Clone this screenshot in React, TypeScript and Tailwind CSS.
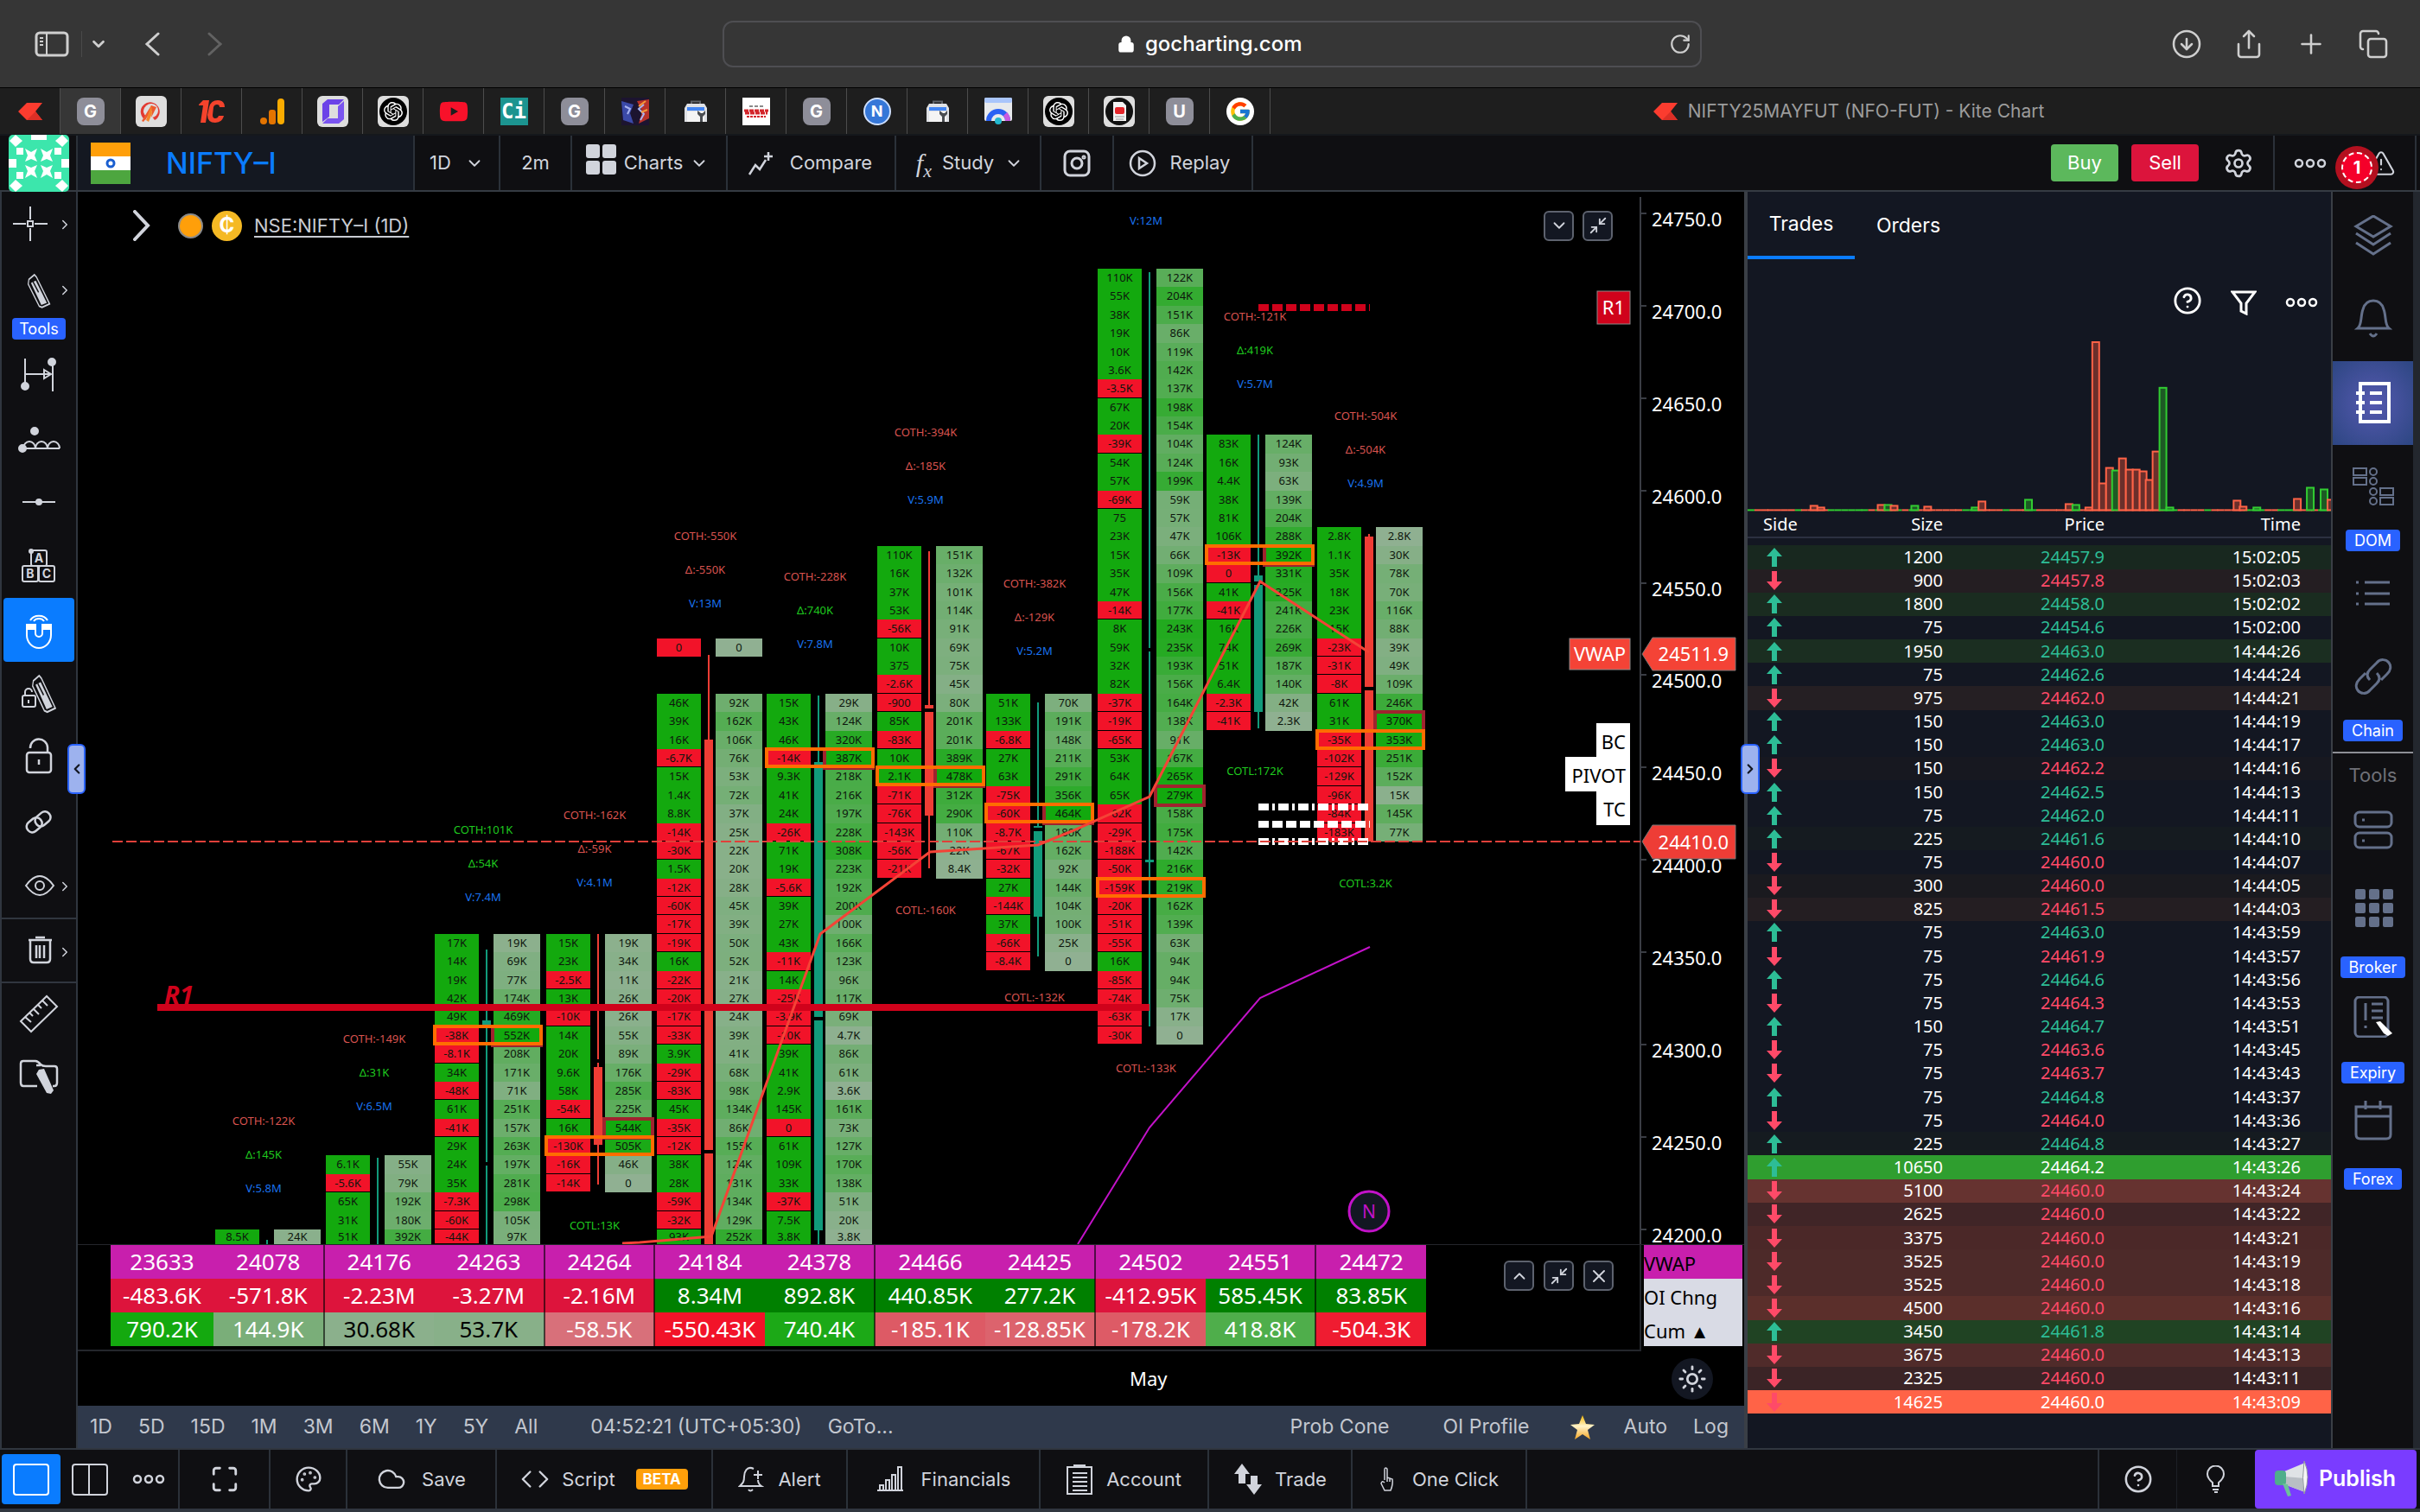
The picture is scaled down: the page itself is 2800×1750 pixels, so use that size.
import React from "react";
import type { ReactNode } from "react";
import {
  ChevronDown,
  ChevronLeft,
  ChevronRight,
  ChevronUp,
  CircleArrowDown,
  CircleHelp,
  Cloud,
  Code,
  Copy,
  Lock,
  Maximize,
  Minimize2,
  Palette,
  Plus,
  RotateCw,
  Settings,
  Share,
  Sun,
  TriangleAlert,
  X,
} from "lucide-react";
import { SiOpenai } from "react-icons/si";
import { FaYoutube } from "react-icons/fa";
import { FcGoogle } from "react-icons/fc";

const UI = "font-['Inter',sans-serif]";
const DATA = "font-['Noto_Sans',sans-serif]";

/* ---------------------------------------------------------------- browser */

function KiteLogo() {
  return (
    <svg viewBox="0 0 28 20" className="h-5 w-7" aria-hidden="true">
      <path d="M10 0H28L20 10L28 20H10L0 10Z" fill="#fb3c2f" />
      <path d="M20 10L28 20H10Z" fill="#dc2f26" />
    </svg>
  );
}

function LetterTile({ letter }: { letter: string }) {
  return (
    <span className="flex size-8 items-center justify-center rounded-lg bg-[#8e8e99] text-xl font-bold text-white">
      {letter}
    </span>
  );
}

function OpenAiTile() {
  return (
    <span className="flex size-9 items-center justify-center rounded-md bg-[#dedede]">
      <span className="flex size-8 items-center justify-center rounded-full bg-black text-white">
        <SiOpenai size={22} />
      </span>
    </span>
  );
}

function ToolboxIcon() {
  return (
    <svg viewBox="0 0 28 26" className="h-[26px] w-7" aria-hidden="true">
      <path d="M9 5V1.500H19V5" fill="none" stroke="#5f6368" strokeWidth="2" />
      <path d="M4 4H24L27 9V25H1V9Z" fill="#dfe1e5" />
      <rect x="4" y="8" width="20" height="4" fill="#4285f4" />
      <rect x="4" y="13" width="20" height="12" fill="#f4f4f4" />
      <path d="M16 12v4l3 3v6h3v-6l3-3v-4l-3 3h-2Z" fill="#4a4d52" />
    </svg>
  );
}

function PTile() {
  return (
    <svg viewBox="0 0 36 36" className="size-9" aria-hidden="true">
      <rect width="36" height="36" rx="6" fill="#dedede" />
      <path d="M14 29A11 11 0 1 1 22 28L19 24A7 7 0 1 0 13 24L11 28" fill="#e23b33" fillRule="evenodd" />
      <circle cx="18" cy="17" r="8" fill="#dedede" />
      <path d="M18 11L24 13L18 25L19 17L9 30L7 29Z" fill="#ee5a2e" />
      <path d="M18 11L12 28L15 30L19 20Z" fill="#f2862b" />
    </svg>
  );
}

function OneCTile() {
  return (
    <svg viewBox="0 0 32 28" className="h-7 w-8" aria-hidden="true">
      <path d="M1 6L6 1H13L9 27H3L6 7H1Z" fill="#f4432c" />
      <path d="M31 9H25Q25 6 22 6Q19 6 18 9L17 18Q17 22 20 22Q23 22 24 19H30Q28 27 20 27Q11 27 11 18L13 9Q15 1 23 1Q31 1 31 9Z" fill="#f4432c" />
    </svg>
  );
}

function AnalyticsTile() {
  return (
    <svg viewBox="0 0 28 30" className="h-[30px] w-7" aria-hidden="true">
      <circle cx="4" cy="26" r="4" fill="#e37400" />
      <rect x="10" y="13" width="8" height="17" rx="3" fill="#e37400" />
      <rect x="20" y="0" width="8" height="30" rx="4" fill="#f9ab00" />
    </svg>
  );
}

function PurpleTile() {
  return (
    <svg viewBox="0 0 36 36" className="size-9" aria-hidden="true">
      <rect width="36" height="36" rx="6" fill="#dedede" />
      <path d="M12 4H31L25 10H14V24L6 30V9Z" fill="#6b42e8" />
      <path d="M24 12L31 6V27L25 32H6L12 26H24Z" fill="#7a54f0" />
    </svg>
  );
}

function CiTile() {
  return (
    <span className="flex size-8 items-center justify-center bg-[#1c9490] text-2xl font-bold text-white font-['DejaVu_Sans_Mono',monospace]">
      Ci
    </span>
  );
}

function ArtTile() {
  return (
    <svg viewBox="0 0 32 32" className="size-8" aria-hidden="true">
      <rect width="32" height="32" fill="#1c1430" />
      <path d="M0 4L14 8L10 18L14 30L2 26Z" fill="#3b4aa8" />
      <path d="M18 4L32 2V24L20 30L24 16Z" fill="#b8322a" />
      <path d="M4 10l6 3-3 6M26 8l-6 5 6 6-4 7" fill="none" stroke="#a9b4f0" strokeWidth="2" />
      <path d="M28 4l-8 6M30 14l-7 3" stroke="#f59a3a" strokeWidth="2" />
    </svg>
  );
}

function AlertTile() {
  return (
    <svg viewBox="0 0 32 32" className="size-8" aria-hidden="true">
      <rect width="32" height="32" fill="#fff" />
      <path d="M8 10H24" stroke="#8a8a8a" strokeWidth="2" strokeDasharray="4 2" />
      <path d="M2 15H30M3 18H29" stroke="#d3262c" strokeWidth="3" strokeDasharray="5 1" />
      <path d="M5 22H27" stroke="#d3262c" strokeWidth="2" strokeDasharray="3 1" />
    </svg>
  );
}

function NTile() {
  return (
    <span className="flex size-8 items-center justify-center rounded-full border-2 border-[#cfe0ff] bg-[#3577d8] text-lg font-bold text-white">
      N
    </span>
  );
}

function GaugeTile() {
  return (
    <svg viewBox="0 0 32 32" className="size-8" aria-hidden="true">
      <rect width="32" height="27" rx="2" fill="#e8eaed" />
      <rect width="32" height="6" rx="2" fill="#a9c5fb" />
      <path d="M5 27A11 11 0 0 1 27 27" fill="none" stroke="#2a62f4" strokeWidth="6" />
      <path d="M24 19A11 11 0 0 1 27 27" fill="none" stroke="#c95be0" strokeWidth="6" />
      <circle cx="16" cy="27" r="4" fill="#22b8cf" />
    </svg>
  );
}

function DocTile() {
  return (
    <svg viewBox="0 0 36 36" className="size-9" aria-hidden="true">
      <rect width="36" height="36" rx="6" fill="#dedede" />
      <circle cx="18" cy="18" r="16" fill="#111" />
      <path d="M11 7H22L26 11V29H11Z" fill="#f3f3f3" />
      <rect x="13" y="13" width="11" height="8" rx="2" fill="#e5252a" />
      <path d="M13 24H24M14 27H23" stroke="#999" />
    </svg>
  );
}

const tabs: { name: string; icon: ReactNode }[] = [
  { name: "Kite", icon: <KiteLogo /> },
  { name: "GoCharting", icon: <LetterTile letter="G" /> },
  { name: "Tab 3", icon: <PTile /> },
  { name: "Tab 4", icon: <OneCTile /> },
  { name: "Analytics", icon: <AnalyticsTile /> },
  { name: "Tab 6", icon: <PurpleTile /> },
  { name: "ChatGPT", icon: <OpenAiTile /> },
  { name: "YouTube", icon: <FaYoutube size={34} color="#f8112a" /> },
  { name: "Tab 9", icon: <CiTile /> },
  { name: "Tab 10", icon: <LetterTile letter="G" /> },
  { name: "Tab 11", icon: <ArtTile /> },
  { name: "Tab 12", icon: <ToolboxIcon /> },
  { name: "Tab 13", icon: <AlertTile /> },
  { name: "Tab 14", icon: <LetterTile letter="G" /> },
  { name: "Tab 15", icon: <NTile /> },
  { name: "Tab 16", icon: <ToolboxIcon /> },
  { name: "PageSpeed", icon: <GaugeTile /> },
  { name: "ChatGPT 2", icon: <OpenAiTile /> },
  { name: "Tab 19", icon: <DocTile /> },
  { name: "Tab 20", icon: <LetterTile letter="U" /> },
  {
    name: "Google",
    icon: (
      <span className="flex size-8 items-center justify-center rounded-full bg-white">
        <FcGoogle size={26} />
      </span>
    ),
  },
];

function BrowserChrome() {
  return (
    <header className="bg-[#363636] text-[#cfcfcf]">
      <div className="flex h-[102px] items-center border-b border-black pr-[36px] pl-[40px]">
        <div className="flex flex-1 items-center">
          <button aria-label="Sidebar" className="border-r border-[#4a4a4a] pr-[14px]">
            <svg viewBox="0 0 40 30" className="h-[30px] w-10" fill="none" stroke="currentColor" strokeWidth="3" aria-hidden="true">
              <rect x="2" y="2" width="36" height="26" rx="4" />
              <path d="M14 2V28" strokeWidth="2" />
              <path d="M6 8H10M6 12H10M6 16H10" strokeWidth="2" />
            </svg>
          </button>
          <button aria-label="Tab groups" className="ml-2">
            <ChevronDown size={22} strokeWidth={3} />
          </button>
          <button aria-label="Back" className="ml-[42px]">
            <svg viewBox="0 0 20 28" className="h-7 w-5" fill="none" stroke="currentColor" strokeWidth="3" strokeLinecap="round" aria-hidden="true">
              <path d="M16 2L3 14L16 26" />
            </svg>
          </button>
          <button aria-label="Forward" className="ml-[52px] text-[#626262]">
            <svg viewBox="0 0 20 28" className="h-7 w-5" fill="none" stroke="currentColor" strokeWidth="3" strokeLinecap="round" aria-hidden="true">
              <path d="M3 2L16 14L3 26" />
            </svg>
          </button>
        </div>
        <div className="flex h-[54px] w-[1133px] items-center rounded-xl border-2 border-[#4e4e52] pr-[10px]">
          <div className="flex flex-1 items-center justify-center gap-3 pl-9 text-white">
            <Lock size={20} strokeWidth={3} className="fill-current" />
            <input
              aria-label="Address"
              defaultValue="gocharting.com"
              className="w-[186px] bg-transparent text-[24px] font-medium text-white outline-none"
            />
          </div>
          <button aria-label="Reload">
            <RotateCw size={26} />
          </button>
        </div>
        <div className="flex flex-1 items-center justify-end gap-[36px]">
          <button aria-label="Downloads"><CircleArrowDown size={36} strokeWidth={1.700} /></button>
          <button aria-label="Share"><Share size={36} strokeWidth={1.700} /></button>
          <button aria-label="New tab"><Plus size={36} strokeWidth={1.700} /></button>
          <button aria-label="Show tabs"><Copy size={36} strokeWidth={1.700} /></button>
        </div>
      </div>
      <div className="flex h-[55px] border-b-2 border-[#15181c] bg-[#1e1e1e]">
        {tabs.map((t, i) => (
          <button
            key={t.name}
            aria-label={t.name}
            className={`flex w-[70px] shrink-0 items-center justify-center border-r border-[#4c4c4c] ${i === 1 ? "bg-[#363636]" : ""}`}
          >
            {t.icon}
          </button>
        ))}
        <a href="#kite" className="flex flex-1 items-center justify-center gap-3 pl-[8px] text-[21px] text-[#9c9c9c]">
          <KiteLogo />
          NIFTY25MAYFUT (NFO-FUT) - Kite Chart
        </a>
      </div>
    </header>
  );
}

/* ---------------------------------------------------------------- top bar */

function Dots({ className = "" }: { className?: string }) {
  return (
    <svg viewBox="0 0 38 14" className={`h-[14px] w-[38px] ${className}`} fill="none" stroke="currentColor" strokeWidth="2.500" aria-hidden="true">
      <circle cx="6" cy="7" r="4" />
      <circle cx="19" cy="7" r="4" />
      <circle cx="32" cy="7" r="4" />
    </svg>
  );
}

function Avatar() {
  return (
    <svg viewBox="0 0 70 66" className="h-[66px] w-[70px]" aria-hidden="true">
      <rect width="70" height="66" rx="5" fill="#3ce6ac" />
      <g fill="#fff">
        {[0, 1, 2, 3].map((q) => (
          <g key={q} transform={`${q % 2 ? "translate(70 0) scale(-1 1)" : ""} ${q > 1 ? "translate(0 66) scale(1 -1)" : ""}`}>
            <path d="M8 0L16 7L8 14L1 7Z" />
            <rect x="9" y="15" width="8" height="8" />
            <path d="M19 16L26 20L33 16L30 24L33 31L26 28L19 31L22 24Z" />
            <path d="M26 0H35V6H26Z" opacity={q > 1 ? 0 : 1} />
            <rect x="0" y="28" width="9" height="5" />
          </g>
        ))}
      </g>
    </svg>
  );
}

function TopBar() {
  const cell = "flex items-center border-r-2 border-[#2b3139]";
  return (
    <div className="flex h-[65px] border-b-2 border-[#353b43] bg-[#0f0f12] text-[22px] text-[#d1d4dc]">
      <button aria-label="Profile" className="flex w-[90px] shrink-0 items-center border-r-2 border-[#2b3139] pl-[10px]">
        <Avatar />
      </button>
      <button className="flex w-[390px] items-center gap-[41px] border-r-2 border-[#2b3139] bg-[#141821] pl-[15px] text-[34px] font-medium text-[#0a7cff]">
        <svg viewBox="0 0 46 48" className="h-12 w-[46px]" aria-hidden="true">
          <rect width="46" height="16" fill="#ff9f0a" />
          <rect y="16" width="46" height="16" fill="#fff" />
          <rect y="32" width="46" height="16" fill="#4da63f" />
          <circle cx="23" cy="24" r="4" fill="none" stroke="#1a5fd0" strokeWidth="3" />
        </svg>
        NIFTY–I
      </button>
      <button className={`${cell} w-[99px] justify-center gap-4`}>
        1D <ChevronDown size={22} />
      </button>
      <button className={`${cell} w-[83px] justify-center`}>2m</button>
      <button className={`${cell} w-[180px] justify-center gap-2 pr-1`}>
        <svg viewBox="0 0 36 36" className="mb-2 size-9 fill-current" aria-hidden="true">
          <rect width="16" height="16" rx="3" />
          <rect x="19" width="16" height="16" rx="3" />
          <rect y="19" width="16" height="16" rx="3" />
          <rect x="19" y="19" width="16" height="16" rx="3" />
        </svg>
        Charts <ChevronDown size={22} />
      </button>
      <button className={`${cell} w-[195px] justify-center gap-[18px] pr-1`}>
        <svg viewBox="0 0 32 30" className="h-[30px] w-8" fill="none" stroke="currentColor" strokeWidth="2.500" aria-hidden="true">
          <path d="M3 28L10 17L15 22L22 11M20 7H30M25 2V12" />
        </svg>
        Compare
      </button>
      <button className={`${cell} w-[168px] justify-center gap-3 pl-1`}>
        <span className="italic font-['Liberation_Serif',serif] text-[30px]">
          f<sub className="text-[22px]">x</sub>
        </span>
        Study <ChevronDown size={22} />
      </button>
      <button aria-label="Snapshot" className={`${cell} w-[84px] justify-center`}>
        <svg viewBox="0 0 32 32" className="size-8" fill="none" stroke="currentColor" strokeWidth="3" aria-hidden="true">
          <rect x="2" y="2" width="28" height="28" rx="6" />
          <circle cx="16" cy="16" r="6" />
          <circle cx="24" cy="9" r="1" />
        </svg>
      </button>
      <button className={`${cell} w-[161px] justify-center gap-[16px] pr-2`}>
        <svg viewBox="0 0 32 32" className="size-8" fill="none" stroke="currentColor" strokeWidth="2.500" aria-hidden="true">
          <circle cx="16" cy="16" r="14" />
          <path d="M12 10L21 16L12 22Z" />
        </svg>
        Replay
      </button>
      <div className="flex flex-1 items-center justify-end border-r-2 border-[#2b3139]">
        <button className="mr-[15px] h-[43px] w-[78px] rounded bg-[#5cb85c] text-white">Buy</button>
        <button className="mr-[9px] h-[43px] w-[78px] rounded bg-[#dc143c] text-white">Sell</button>
        <button aria-label="Settings" className="mr-1 flex w-[73px] justify-center">
          <Settings size={36} strokeWidth={1.800} />
        </button>
      </div>
      <button aria-label="More" className="flex w-[82px] items-center justify-center">
        <Dots />
      </button>
      <button aria-label="Warnings" className="relative mr-[4px] flex w-[82px] items-center border-r-2 border-[#2b3139] pl-[24px]">
        <TriangleAlert size={34} strokeWidth={1.500} />
        <span className="absolute top-[12px] left-[-12px] flex size-[50px] items-center justify-center rounded-full bg-[#b3101f]">
          <span className="flex size-9 items-center justify-center rounded-full border-2 border-dashed border-white bg-[#f5002a] text-xl font-bold text-white">
            1
          </span>
        </span>
      </button>
    </div>
  );
}

/* ----------------------------------------------------------- left toolbar */

const pencilBody = (
  <>
    <path d="M3 4L11 0L14 2L33 25L22 28L18 27L2 8Z" fill="none" stroke="currentColor" strokeWidth="1.500" />
    <path d="M6 7L13 5L29 24L21 26Z" fill="currentColor" />
    <path d="M9 6L17 15" stroke="#0f0f12" strokeWidth="1.500" />
  </>
);

const leftTools: { name: string; icon: ReactNode; more?: boolean; tall?: boolean; active?: boolean; divide?: boolean }[] = [
  {
    name: "Cursor",
    more: true,
    icon: (
      <path d="M2 20H17M27 20H42M22 0V15M22 25V40M19 17H25V23H19Z" fill="none" stroke="currentColor" strokeWidth="2" />
    ),
  },
  { name: "Drawing tools", more: true, tall: true, icon: <g transform="translate(8 2) scale(.8 1.350)">{pencilBody}</g> },
  {
    name: "Date range",
    icon: (
      <g fill="none" stroke="currentColor" strokeWidth="2">
        <path d="M6 2V36M38 4V40M6 20H36M28 15L36 20L28 25Z" />
        <circle cx="6" cy="34" r="4" fill="currentColor" />
        <circle cx="37" cy="6" r="4" fill="currentColor" />
      </g>
    ),
  },
  {
    name: "Cycles",
    icon: (
      <g fill="none" stroke="currentColor" strokeWidth="2">
        <path d="M0 32H46M4 32A7 8 0 0 1 18 32A7 8 0 0 1 32 32A7 8 0 0 1 46 32" />
        <circle cx="3" cy="32" r="4" fill="currentColor" />
        <circle cx="17" cy="12" r="4" fill="currentColor" />
      </g>
    ),
  },
  {
    name: "Horizontal line",
    icon: (
      <>
        <path d="M3 20H41" stroke="currentColor" strokeWidth="2" />
        <circle cx="22" cy="20" r="4" fill="currentColor" />
      </>
    ),
  },
  {
    name: "Pattern",
    icon: (
      <g>
        <g fill="none" stroke="currentColor" strokeWidth="2">
          <rect x="13" y="2" width="18" height="18" rx="2" />
          <rect x="3" y="20" width="18" height="18" rx="2" />
          <rect x="22" y="20" width="18" height="18" rx="2" />
        </g>
        <circle cx="13" cy="3" r="3" fill="currentColor" />
        <g fill="currentColor" className="text-[14px] font-bold" textAnchor="middle">
          <text x="22" y="16">A</text>
          <text x="12" y="34">B</text>
          <text x="31" y="34">C</text>
        </g>
      </g>
    ),
  },
  {
    name: "Magnet",
    active: true,
    icon: (
      <g fill="none" stroke="currentColor" strokeWidth="2">
        <path d="M8 14H18V24A4 4 0 0 0 26 24V14H36V26A14 15 0 0 1 8 26Z" />
        <path d="M8 14H18V19H8ZM26 14H36V19H26Z" fill="currentColor" />
        <path d="M12 9A11 9 0 0 1 32 9M16 10A7 6 0 0 1 28 10" />
      </g>
    ),
  },
  {
    name: "Lock drawing mode",
    icon: (
      <>
        <g transform="translate(13 -1) scale(.85 1.500)">{pencilBody}</g>
        <g fill="none" stroke="currentColor" strokeWidth="2">
          <rect x="3" y="22" width="15" height="13" rx="2" fill="#0f0f12" />
          <path d="M6 22V18A4 4 0 0 1 14 18M10 27V31" />
        </g>
      </>
    ),
  },
  {
    name: "Unlock",
    icon: (
      <g fill="none" stroke="currentColor" strokeWidth="2.500">
        <rect x="8" y="14" width="28" height="23" rx="3" />
        <path d="M12 9A10 10 0 0 1 32 8V14M22 22V28" />
      </g>
    ),
  },
  {
    name: "Link",
    icon: (
      <g fill="none" stroke="currentColor" strokeWidth="2.500" transform="rotate(-40 22 20)">
        <rect x="6" y="13" width="19" height="13" rx="6" />
        <rect x="18" y="14" width="19" height="13" rx="6" />
      </g>
    ),
  },
  {
    name: "Visibility",
    more: true,
    icon: (
      <g fill="none" stroke="currentColor" strokeWidth="2">
        <path d="M7 20Q23 -2 39 20Q23 42 7 20Z" />
        <circle cx="23" cy="20" r="5" />
      </g>
    ),
  },
  {
    name: "Delete",
    more: true,
    divide: true,
    icon: (
      <g fill="none" stroke="currentColor" strokeWidth="2.500">
        <path d="M10 8H37M12 8V30Q12 34 16 34H31Q35 34 35 30V8M18 5H29M19 14V29M23 14V29M28 14V29" />
      </g>
    ),
  },
  {
    name: "Ruler",
    divide: true,
    icon: (
      <g fill="none" stroke="currentColor" strokeWidth="2">
        <path d="M1 28L31 -1L43 11L13 40Z" />
        <path d="M6 23L13 29M11 18L15 22M16 14L22 20M21 9L25 13M26 4L32 10" />
      </g>
    ),
  },
  {
    name: "Object tree",
    icon: (
      <g>
        <path d="M20 30H4Q1 30 1 26V4Q1 1 4 1H18Q21 1 24 5Q26 7 30 7H40Q43 7 43 10V26Q43 30 40 30H38M19 6H24" fill="none" stroke="currentColor" strokeWidth="2.500" />
        <path d="M19 16L22 11L28 10L39 35L36 39L31 38Z" fill="currentColor" />
      </g>
    ),
  },
];

function LeftToolbar() {
  return (
    <nav aria-label="Drawing toolbar" className="relative flex w-[90px] shrink-0 flex-col border-r-2 border-l-2 border-[#30363f] bg-[#0f0f12] text-[#d1d4dc]">
      {leftTools.map((t) => (
        <button
          key={t.name}
          aria-label={t.name}
          className={`relative flex flex-col items-center justify-center ${t.tall ? "h-[100px] pt-4" : "h-[74px] pt-1"} ${t.divide ? "border-t-2 border-[#30363f]" : ""} ${
            t.active ? "mx-[2px] rounded bg-[#0a7cff] text-white" : ""
          } ${t.name === "Cursor" ? "pr-5" : ""}`}
        >
          <svg viewBox="0 0 44 44" className="h-11 w-11 overflow-visible" aria-hidden="true">
            {t.icon}
          </svg>
          {t.more && <ChevronRight size={18} className={`absolute right-[4px] ${t.tall ? "top-[31px]" : "top-[29px]"}`} />}
          {t.tall && <span className="mt-2 w-[62px] rounded bg-[#2962ff] text-[18px] leading-[25px] text-white">Tools</span>}
        </button>
      ))}
      <button
        aria-label="Collapse toolbar"
        className="absolute top-[639px] right-[-11px] z-10 flex h-[58px] w-[21px] items-center justify-center rounded-md border-2 border-[#2962ff] bg-[#9db2ee] text-[#131722]"
      >
        <ChevronLeft size={18} strokeWidth={3} className="shrink-0" />
      </button>
    </nav>
  );
}

/* ------------------------------------------------------------------ chart */

const TOP = 311;
const ROW = 21.385;
const FLOOR = 1440;
const rowY = (r: number) => Math.min(FLOOR, Math.round(TOP + r * ROW));

type Bar = {
  x: number;
  row: number;
  delta: string;
  volume: string;
  max: number;
  box?: number;
  peak?: number;
  up: boolean;
  wick: [number, number];
  bodies: [number, number][];
  gap?: number;
  note?: { y: number; coth: string; d: string; v: string };
  cotl?: { y: number; text: string };
};

const bars: Bar[] = [
  { x: 249, row: 52, delta: "8.5K", volume: "24K", max: 500, up: true, wick: [1435, FLOOR], bodies: [], note: { y: 1298, coth: "-122K", d: "145K", v: "5.8M" } },
  {
    x: 377, row: 48, max: 650, up: true, wick: [1340, FLOOR], bodies: [],
    delta: "6.1K -5.6K 65K 31K 51K",
    volume: "55K 79K 192K 180K 392K",
    note: { y: 1203, coth: "-149K", d: "31K", v: "6.5M" },
  },
  {
    x: 503, row: 36, max: 552, box: 41, peak: 41, up: true, wick: [1099, FLOOR], bodies: [[1181, 1186]], gap: 1345,
    delta: "17K 14K 19K 42K 49K -38K -8.1K 34K -48K 61K -41K 29K 24K 35K -7.3K -60K -44K",
    volume: "19K 69K 77K 174K 469K 552K 208K 171K 71K 251K 157K 263K 197K 281K 298K 105K 97K",
    note: { y: 961, coth: "101K", d: "54K", v: "7.4M" },
  },
  {
    x: 632, row: 36, max: 544, box: 47, peak: 46, up: false, wick: [1081, 1371], bodies: [[1235, 1325]], gap: 1226,
    delta: "15K 23K -2.5K 13K -10K 14K 20K 9.6K 58K -54K 16K -130K -16K -14K",
    volume: "19K 34K 11K 26K 26K 55K 89K 176K 285K 225K 544K 505K 46K 0",
    note: { y: 944, coth: "-162K", d: "-59K", v: "4.1M" },
    cotl: { y: 1418, text: "13K" },
  },
  {
    x: 760, row: 23, max: 340, up: false, wick: [758, FLOOR], bodies: [[856, FLOOR]], gap: 1331,
    delta: "46K 39K 16K -6.7K 15K 1.4K 8.8K -14K -30K 1.5K -12K -60K -17K -19K 16K -22K -20K -17K -33K 3.9K -29K -83K 45K -35K -12K 38K 28K -59K -32K 93K",
    volume: "92K 162K 106K 76K 53K 72K 37K 25K 22K 20K 28K 45K 39K 50K 52K 21K 27K 24K 39K 41K 68K 98K 134K 86K 155K 124K 131K 134K 129K 252K",
    note: { y: 621, coth: "-550K", d: "-550K", v: "13M" },
  },
  {
    x: 887, row: 23, max: 387, box: 26, peak: 26, up: true, wick: [805, FLOOR], bodies: [[882, 1424]], gap: 1177,
    delta: "15K 43K 46K -14K 9.3K 41K 24K -26K 71K 19K -5.6K 39K 27K 43K -11K 14K -25K -3.9K -10K 39K 41K 2.9K 145K 0 61K 109K 33K -37K 7.5K 3.8K",
    volume: "29K 124K 320K 387K 218K 216K 197K 228K 308K 223K 192K 200K 100K 166K 123K 96K 117K 69K 4.7K 86K 61K 3.6K 161K 73K 127K 170K 138K 51K 20K 3.8K",
    note: { y: 668, coth: "-228K", d: "740K", v: "7.8M" },
  },
  {
    x: 1015, row: 15, max: 478, box: 27, peak: 27, up: false, wick: [638, 1005], bodies: [[816, 944]], gap: 820,
    delta: "110K 16K 37K 53K -56K 10K 375 -2.6K -900 85K -83K 10K 2.1K -71K -76K -143K -56K -21K",
    volume: "151K 132K 101K 114K 91K 69K 75K 45K 80K 201K 201K 389K 478K 312K 290K 110K 22K 8.4K",
    note: { y: 501, coth: "-394K", d: "-185K", v: "5.9M" },
    cotl: { y: 1053, text: "-160K" },
  },
  {
    x: 1141, row: 23, max: 464, box: 29, peak: 29, up: true, wick: [813, 1107], bodies: [[956, 1061]], gap: 958,
    delta: "51K 133K -6.8K 27K 63K -75K -60K -8.7K -67K -32K 27K -144K 37K -66K -8.4K",
    volume: "70K 191K 148K 211K 291K 356K 464K 180K 162K 92K 144K 104K 100K 25K 0",
    note: { y: 676, coth: "-382K", d: "-129K", v: "5.2M" },
    cotl: { y: 1154, text: "-132K" },
  },
  {
    x: 1270, row: 0, max: 279, box: 33, peak: 28, up: true, wick: [315, 1188], bodies: [[995, 998]], gap: 750,
    delta: "110K 55K 38K 19K 10K 3.6K -3.5K 67K 20K -39K 54K 57K -69K 75 23K 15K 35K 47K -14K 8K 59K 32K 82K -37K -19K -65K 53K 64K 65K -62K -29K -188K -50K -159K -20K -51K -55K 16K -85K -74K -63K -30K",
    volume: "122K 204K 151K 86K 119K 142K 137K 198K 154K 104K 124K 199K 59K 57K 47K 66K 109K 156K 177K 243K 235K 193K 156K 164K 138K 91K 167K 265K 279K 158K 175K 142K 216K 219K 162K 139K 63K 94K 94K 75K 17K 0",
    note: { y: 178, coth: "", d: "", v: "12M" },
    cotl: { y: 1236, text: "-133K" },
  },
  {
    x: 1396, row: 9, max: 392, box: 15, peak: 15, up: true, wick: [503, 843], bodies: [[666, 824]], gap: 673,
    delta: "83K 16K 4.4K 38K 81K 106K -13K 0 41K -41K 16K 74K 51K 6.4K -2.3K -41K",
    volume: "124K 93K 63K 139K 204K 288K 392K 331K 325K 241K 226K 269K 187K 140K 42K 2.3K",
    note: { y: 367, coth: "-121K", d: "419K", v: "5.7M" },
    cotl: { y: 892, text: "172K" },
  },
  {
    x: 1524, row: 14, max: 370, box: 25, peak: 24, up: false, wick: [618, 974], bodies: [[621, 974]], gap: 795,
    delta: "2.8K 1.1K 35K 18K 23K 15K -23K -31K -8K 61K 31K -35K -102K -129K -96K -84K -183K",
    volume: "2.8K 30K 78K 70K 116K 88K 39K 49K 109K 246K 370K 353K 251K 152K 15K 145K 77K",
    note: { y: 482, coth: "-504K", d: "-504K", v: "4.9M" },
    cotl: { y: 1022, text: "3.2K" },
  },
];

function shade(value: string, max: number) {
  const t = Math.min(1, parseFloat(value) / max);
  const mix = (a: number, b: number) => Math.round(a + (b - a) * t);
  return `rgb(${mix(144, 18)},${mix(176, 169)},${mix(146, 14)})`;
}

function Cell({ x, y, h, w, fill, text }: { x: number; y: number; h: number; w: number; fill: string; text: string }) {
  return (
    <>
      <rect x={x} y={y} width={w} height={h} fill={fill} />
      <text x={x + w / 2} y={h < 19 ? y + 13 : y + 15} fill="#0d160d" textAnchor="middle">{text}</text>
    </>
  );
}

const signColor = (s: string) => (s.startsWith("-") ? "#d9534f" : "#1fc91f");

function Footprint({ bar }: { bar: Bar }) {
  const d = bar.delta.split(" ");
  const v = bar.volume.split(" ");
  const c = bar.x + 60;
  const color = bar.up ? "#119b7b" : "#ef3d35";
  return (
    <g>
      {d.map((t, i) => {
        const y = rowY(bar.row + i);
        const h = rowY(bar.row + i + 1) - y;
        const red = t.startsWith("-") || t === "0";
        return (
          <g key={i}>
            <Cell x={bar.x} y={y} w={51} h={red ? h - 1 : h} fill={red ? "#f21329" : "#13a90e"} text={t} />
            <Cell x={bar.x + 68} y={y} w={54} h={h} fill={shade(v[i], bar.max)} text={v[i]} />
          </g>
        );
      })}
      <rect x={c - 1} y={bar.wick[0]} width={2} height={bar.wick[1] - bar.wick[0]} fill={color} />
      {bar.bodies.map(([a, b]) => (
        <rect key={a} x={c - 5} y={a} width={10} height={b - a} fill={color} />
      ))}
      {bar.gap && <rect x={c - 6} y={bar.gap} width={12} height={4} fill="#000" />}
      {bar.peak !== undefined && (
        <rect x={bar.x + 67} y={rowY(bar.peak)} width={56} height={22} fill="none" stroke="#a0232e" strokeWidth={4} />
      )}
      {bar.box !== undefined && (
        <rect x={bar.x} y={rowY(bar.box)} width={123} height={20} fill="none" stroke="#ff6d00" strokeWidth={4} />
      )}
      <g textAnchor="middle">
        {bar.note && (
          <>
            {bar.note.coth && <text x={bar.x + 56} y={bar.note.y + 4} fill={signColor(bar.note.coth)}>COTH:{bar.note.coth}</text>}
            {bar.note.d && <text x={bar.x + 56} y={bar.note.y + 43} fill={signColor(bar.note.d)}>Δ:{bar.note.d}</text>}
            <text x={bar.x + 56} y={bar.note.y + 82} fill="#1a73f0">V:{bar.note.v}</text>
          </>
        )}
        {bar.cotl && <text x={bar.x + 56} y={bar.cotl.y + 5} fill={signColor(bar.cotl.text)}>COTL:{bar.cotl.text}</text>}
      </g>
    </g>
  );
}

const ticks = [24750, 24700, 24650, 24600, 24550, 24500, 24450, 24400, 24350, 24300, 24250, 24200];
const priceY = (p: number) => Math.round(1209 - ((p - 24300) / 50) * 106.9);

function Plot() {
  return (
    <svg viewBox="90 222 1928 1218" className={`block w-full ${DATA}`} role="img" aria-label="NIFTY-I footprint chart">
      <rect x="90" y="222" width="1928" height="1218" fill="#000" />
      <path d="M1898 228V1440" stroke="#3a3d44" strokeWidth="2" />
      <g className="text-[13px]">
        <Cell x={760} y={rowY(20)} w={51} h={21} fill="#f21329" text="0" />
        <Cell x={828} y={rowY(20)} w={54} h={21} fill="#90b092" text="0" />
        {bars.map((b) => (
          <Footprint key={b.x} bar={b} />
        ))}
      </g>
      <path d="M182 1166H1330" stroke="#d0021b" strokeWidth="8" />
      <text x="190" y="1162" fill="#d0021b" className="text-[29px] font-bold italic">R1</text>
      <path d="M1456 356H1585" stroke="#d0021b" strokeWidth="8" strokeDasharray="12 4" />
      <g stroke="#fff" strokeWidth="8">
        <path d="M1456 934H1585" strokeDasharray="12 4 3 4" />
        <path d="M1456 954H1585" strokeDasharray="12 4" />
        <path d="M1456 974H1585" strokeDasharray="12 4 3 4" />
      </g>
      <path d="M130 974H1898" stroke="#e0403a" strokeWidth="2" strokeDasharray="12 4" />
      <path d="M720 1439L740 1438L823 1431L949 1081L1076 986L1201 978L1240 962L1330 922L1458 673L1584 755" fill="none" stroke="#f44336" strokeWidth="3" />
      <path d="M1247 1440L1330 1305L1458 1155L1585 1096" fill="none" stroke="#c312c9" strokeWidth="2" />
      <circle cx="1584" cy="1402" r="23" fill="#131722" stroke="#c312c9" strokeWidth="3" />
      <text x="1584" y="1410" fill="#c312c9" textAnchor="middle" className="text-[21px]">N</text>

      <g className="text-[22px]" fill="#fff">
        {ticks.map((p) => (
          <g key={p}>
            <path d={`M1899 ${priceY(p)}H1905`} stroke="#3a3d44" strokeWidth="2" />
            <text x="1911" y={priceY(p) + 15}>{p}.0</text>
          </g>
        ))}
        <rect x="1848" y="337" width="38" height="38" fill="#d0021b" stroke="#8a8a8a" />
        <text x="1867" y="364" textAnchor="middle">R1</text>
        <rect x="1816" y="739" width="70" height="36" fill="#f44336" stroke="#8a8a8a" />
        <text x="1851" y="765" textAnchor="middle">VWAP</text>
        <path d="M1900 757L1912 738H2008V776H1912Z" fill="#f44336" stroke="#777" />
        <text x="2000" y="765" textAnchor="end">24511.9</text>
        <path d="M1900 974L1912 955H2008V994H1912Z" fill="#ee3d36" stroke="#777" />
        <text x="2000" y="983" textAnchor="end">24410.0</text>
        <path d="M1847 837H1886V955H1847V916H1811V876H1847Z" />
        <g fill="#000" textAnchor="end">
          <text x="1881" y="867">BC</text>
          <text x="1881" y="906">PIVOT</text>
          <text x="1881" y="945">TC</text>
        </g>
      </g>
    </svg>
  );
}

type Tone = { t: string; bg: string; dark?: boolean };
const RED = "bg-[#dd143c]";
const GREEN = "bg-[#008000]";
const vwapRow = ["23633", "24078", "24176", "24263", "24264", "24184", "24378", "24466", "24425", "24502", "24551", "24472"];
const oiRow: Tone[] = [
  { t: "-483.6K", bg: RED }, { t: "-571.8K", bg: RED }, { t: "-2.23M", bg: RED }, { t: "-3.27M", bg: RED },
  { t: "-2.16M", bg: RED }, { t: "8.34M", bg: GREEN }, { t: "892.8K", bg: GREEN }, { t: "440.85K", bg: GREEN },
  { t: "277.2K", bg: GREEN }, { t: "-412.95K", bg: RED }, { t: "585.45K", bg: GREEN }, { t: "83.85K", bg: GREEN },
];
const cumRow: Tone[] = [
  { t: "790.2K", bg: "bg-[#14a90f]" }, { t: "144.9K", bg: "bg-[#7aae79]" },
  { t: "30.68K", bg: "bg-[#8bb08c]", dark: true }, { t: "53.7K", bg: "bg-[#88b089]", dark: true },
  { t: "-58.5K", bg: "bg-[#d8707a]" }, { t: "-550.43K", bg: "bg-[#f21329]" },
  { t: "740.4K", bg: "bg-[#1ca917]" }, { t: "-185.1K", bg: "bg-[#dd5a65]" },
  { t: "-128.85K", bg: "bg-[#dc636d]" }, { t: "-178.2K", bg: "bg-[#dd5b66]" },
  { t: "418.8K", bg: "bg-[#4fae4b]" }, { t: "-504.3K", bg: "bg-[#ef1c31]" },
];
const ruled = (i: number) => ([2, 4, 5, 7, 9, 11].includes(i) ? "border-l-2 border-black/60" : "");

function PaneButton({ label, children }: { label: string; children: ReactNode }) {
  return (
    <button aria-label={label} className="flex size-[35px] items-center justify-center rounded-md border-2 border-[#5d626e] bg-[#131722] text-[#d1d4dc]">
      {children}
    </button>
  );
}

function StudyPane() {
  return (
    <div className="flex border-t border-[#24262c] bg-black">
      <div className="flex flex-1 border-r-2 border-b-2 border-[#24262c] pb-1 pl-[38px]">
        <table className={`w-[1522px] table-fixed border-collapse text-center text-[26px] leading-[39px] text-white ${DATA}`}>
          <tbody>
            <tr className="h-[39px]">
              {vwapRow.map((t, i) => (
                <td key={i} className={`bg-[#c81fad] p-0 ${i === 0 ? "w-[119px]" : ""} ${ruled(i)}`}>{t}</td>
              ))}
            </tr>
            {[oiRow, cumRow].map((row, r) => (
              <tr key={r} className="h-[39px]">
                {row.map((c, i) => (
                  <td key={i} className={`p-0 ${c.bg} ${c.dark ? "text-black" : ""} ${ruled(i)}`}>{c.t}</td>
                ))}
              </tr>
            ))}
          </tbody>
        </table>
        <div className="flex flex-1 justify-end gap-[11px] pt-[18px] pr-[30px]">
          <PaneButton label="Move pane up"><ChevronUp size={22} /></PaneButton>
          <PaneButton label="Minimise pane"><Minimize2 size={22} /></PaneButton>
          <PaneButton label="Close pane"><X size={24} /></PaneButton>
        </div>
      </div>
      <div className={`w-[119px] pr-[2px] pl-[3px] text-[22px] leading-[35px] text-black ${DATA}`}>
        <div className="bg-[#c81fad] pt-1">VWAP</div>
        <div className="bg-[#d9dbe5] pt-1">OI Chng</div>
        <div className="bg-[#d9dbe5] pt-1">Cum ▲</div>
      </div>
    </div>
  );
}

function Star() {
  return (
    <svg viewBox="0 0 30 30" className="size-[30px]" aria-hidden="true">
      <defs>
        <linearGradient id="star" x1="0" y1="0" x2="0" y2="1">
          <stop offset="0" stopColor="#f7b500" />
          <stop offset=".45" stopColor="#fff3c9" />
          <stop offset="1" stopColor="#f5a623" />
        </linearGradient>
      </defs>
      <path d="M15 1L19 11L29 12L21 18L24 29L15 23L6 29L9 18L1 12L11 11Z" fill="url(#star)" />
    </svg>
  );
}

function ChartSection() {
  return (
    <section className="relative flex min-w-0 flex-1 flex-col bg-black">
      <Plot />
      <div className="absolute top-[20px] right-0 left-0 flex h-[38px] items-center pr-[152px] pl-[61px]">
        <button aria-label="Expand legend" className="text-[#d1d4dc]">
          <svg viewBox="0 0 24 36" className="h-9 w-6" fill="none" stroke="currentColor" strokeWidth="4" strokeLinecap="round" aria-hidden="true">
            <path d="M5 2L20 18L5 34" />
          </svg>
        </button>
        <span className="ml-[31px] size-[29px] rounded-full border-2 border-[#8a8a8a] bg-[#ff9f0a]" />
        <span className="ml-[10px] flex size-[35px] items-center justify-center rounded-full bg-[#f5b924] text-2xl font-bold text-white">₵</span>
        <a href="#symbol" className="ml-[14px] text-[22px] text-[#c9ccd3] underline decoration-2 underline-offset-4">
          NSE:NIFTY–I (1D)
        </a>
        <div className="flex flex-1 justify-end gap-[10px]">
          <PaneButton label="Move pane down"><ChevronDown size={22} /></PaneButton>
          <PaneButton label="Minimise chart"><Minimize2 size={22} /></PaneButton>
        </div>
      </div>
      <StudyPane />
      <div className={`flex flex-1 items-center bg-black pr-[36px] pl-[1217px] text-[22px] text-white ${DATA}`}>
        <span>May</span>
        <button aria-label="Theme" className="ml-auto flex size-12 items-center justify-center rounded-full bg-[#131722] text-[#d1d4dc]">
          <Sun size={34} strokeWidth={2} />
        </button>
      </div>
      <div className="flex h-[49px] items-center bg-[#2f394b] pr-[18px] pl-[14px] text-[23px] text-[#c3c7cf]">
        {["1D", "5D", "15D", "1M", "3M", "6M", "1Y", "5Y", "All"].map((r) => (
          <button key={r} className="mr-[30px]">{r}</button>
        ))}
        <span className="ml-[31px]">04:52:21 (UTC+05:30)</span>
        <button className="ml-[30px]">GoTo...</button>
        <div className="flex flex-1 items-center justify-end">
          <button className="mr-[62px]">Prob Cone</button>
          <button className="mr-[46px]">OI Profile</button>
          <button aria-label="Favourite" className="mr-[33px]"><Star /></button>
          <button className="mr-[30px]">Auto</button>
          <button>Log</button>
        </div>
      </div>
    </section>
  );
}

/* ------------------------------------------------------------ trades tape */

const spikes: [number, number, "r" | "g"][] = [
  [9, 5, "r"], [10, 3, "r"], [19, 6, "r"], [20, 6, "g"], [21, 5, "r"], [24, 5, "g"], [26, 4, "r"], [33, 3, "g"],
  [34, 10, "r"], [41, 12, "g"], [47, 7, "r"], [48, 6, "g"], [50, 3, "r"], [51, 195, "r"], [52, 31, "r"], [53, 49, "r"],
  [54, 46, "g"], [55, 60, "r"], [56, 47, "r"], [57, 47, "r"], [58, 45, "r"], [59, 35, "r"], [60, 68, "r"], [61, 142, "g"],
  [62, 3, "g"], [72, 11, "r"], [73, 4, "r"], [75, 3, "g"], [81, 13, "r"], [83, 26, "g"], [85, 24, "g"], [86, 12, "r"],
];
const floorColors = "grrrrrrgrrrrggggggrgrrgrgrrrrrrrgggrrrgrrrgrrrrrgrrrrrrrrrrrrrggrrrrgrrrrrgggrrgggrrrggrr";

function TapeHistogram() {
  return (
    <svg viewBox="0 0 677 200" className="block w-full" role="img" aria-label="Trade size histogram">
      {floorColors.slice(0, 87).split("").map((c, i) => (
        <rect key={i} x={Math.round(i * 7.79)} y={197} width={8} height={2} fill={c === "r" ? "#ff6347" : "#32cd32"} />
      ))}
      {spikes.map(([i, h, c]) => (
        <rect
          key={i}
          x={Math.round(400 + (i - 51) * 7.79)}
          y={198 - h}
          width={8}
          height={h}
          fill={c === "r" ? "#6b2f2b" : "#1d5a24"}
          stroke={c === "r" ? "#ff6347" : "#32cd32"}
          strokeWidth={2}
        />
      ))}
    </svg>
  );
}

const N = "";
const trades: [boolean, string, string, string, string][] = [
  [true, "1200", "24457.9", "15:02:05", "bg-[#18281f]"],
  [false, "900", "24457.8", "15:02:03", "bg-[#241e22]"],
  [true, "1800", "24458.0", "15:02:02", "bg-[#1a2c20]"],
  [true, "75", "24454.6", "15:02:00", N],
  [true, "1950", "24463.0", "14:44:26", "bg-[#1b2e21]"],
  [true, "75", "24462.6", "14:44:24", N],
  [false, "975", "24462.0", "14:44:21", "bg-[#251f23]"],
  [true, "150", "24463.0", "14:44:19", N],
  [true, "150", "24463.0", "14:44:17", N],
  [false, "150", "24462.2", "14:44:16", "bg-[#171820]"],
  [true, "150", "24462.5", "14:44:13", N],
  [true, "75", "24462.0", "14:44:11", N],
  [true, "225", "24461.6", "14:44:10", "bg-[#151b20]"],
  [false, "75", "24460.0", "14:44:07", N],
  [false, "300", "24460.0", "14:44:05", "bg-[#1a1a1f]"],
  [false, "825", "24461.5", "14:44:03", "bg-[#241e22]"],
  [true, "75", "24463.0", "14:43:59", N],
  [false, "75", "24461.9", "14:43:57", N],
  [true, "75", "24464.6", "14:43:56", N],
  [false, "75", "24464.3", "14:43:53", N],
  [true, "150", "24464.7", "14:43:51", N],
  [false, "75", "24463.6", "14:43:45", N],
  [false, "75", "24463.7", "14:43:43", N],
  [true, "75", "24464.8", "14:43:37", N],
  [false, "75", "24464.0", "14:43:36", N],
  [true, "225", "24464.8", "14:43:27", "bg-[#151b20]"],
  [true, "10650", "24464.2", "14:43:26", "bg-[#2f9e2f]"],
  [false, "5100", "24460.0", "14:43:24", "bg-[#663330]"],
  [false, "2625", "24460.0", "14:43:22", "bg-[#402527]"],
  [false, "3375", "24460.0", "14:43:21", "bg-[#4b2828]"],
  [false, "3525", "24460.0", "14:43:19", "bg-[#4d2a29]"],
  [false, "3525", "24460.0", "14:43:18", "bg-[#4d2a29]"],
  [false, "4500", "24460.0", "14:43:16", "bg-[#5b2f2b]"],
  [true, "3450", "24461.8", "14:43:14", "bg-[#204323]"],
  [false, "3675", "24460.0", "14:43:13", "bg-[#502b2a]"],
  [false, "2325", "24460.0", "14:43:11", "bg-[#3b2426]"],
  [false, "14625", "24460.0", "14:43:09", "bg-[#ff6347]"],
];

function TradesPanel() {
  return (
    <section className="flex w-[681px] shrink-0 flex-col border-r-2 border-l-4 border-[#3a3f46] bg-[#131722] text-white">
      <div className="flex h-[78px] text-[23px]">
        <button className="w-[124px] border-b-4 border-[#0a7cff]">Trades</button>
        <button className="w-[124px]">Orders</button>
      </div>
      <div className="flex h-[93px] items-end justify-end gap-[33px] pr-[15px] pb-[28px]">
        <button aria-label="Help"><CircleHelp size={34} strokeWidth={2} /></button>
        <button aria-label="Filter">
          <svg viewBox="0 0 30 30" className="size-[30px]" fill="none" stroke="currentColor" strokeWidth="3" aria-hidden="true">
            <path d="M2 3H28L18 16V28L12 25V16Z" />
          </svg>
        </button>
        <button aria-label="More" className="mb-2"><Dots /></button>
      </div>
      <TapeHistogram />
      <table className={`h-[1044px] w-full border-collapse text-right text-[20px] leading-[26px] ${DATA}`}>
        <thead>
          <tr className="h-[30px] border-b-2 border-[#2b3040]">
            <th className="w-[61px] pl-[18px] text-left font-normal">Side</th>
            <th className="w-[165px] font-normal">Size</th>
            <th className="w-[187px] font-normal">Price</th>
            <th className="pr-[35px] font-normal">Time</th>
          </tr>
          <tr className="h-[9px]"><td colSpan={4} className="p-0" /></tr>
        </thead>
        <tbody>
          {trades.map(([up, size, price, time, bg], i) => {
            const big = size.length === 5;
            return (
              <tr key={i} className={bg}>
                <td className="p-0 pl-[22px]">
                  <svg viewBox="0 0 18 22" className={`block h-[22px] w-[18px] ${up ? "" : "rotate-180"}`} role="img" aria-label={up ? "Buy" : "Sell"}>
                    <path d="M9 0L18 10H12V22H6V10H0Z" fill={up ? "#2dbd96" : "#ff4a68"} />
                  </svg>
                </td>
                <td className="p-0">{size}</td>
                <td className={`p-0 ${big ? "" : up ? "text-[#2dbd96]" : "text-[#ff4a68]"}`}>{price}</td>
                <td className="p-0 pr-[35px]">{time}</td>
              </tr>
            );
          })}
        </tbody>
      </table>
    </section>
  );
}

/* ---------------------------------------------------------- right sidebar */

function SideItem({ label, badge, box, gap = "", children }: { label: string; badge?: string; box: string; gap?: string; children: ReactNode }) {
  return (
    <button aria-label={label} className={`flex shrink-0 flex-col items-center ${box}`}>
      <svg viewBox="0 0 48 48" className="size-12 shrink-0" fill="none" stroke="currentColor" strokeWidth="3" aria-hidden="true">
        {children}
      </svg>
      {badge && <span className={`rounded bg-[#2962ff] px-[10px] text-[18px] leading-[25px] text-white ${gap}`}>{badge}</span>}
    </button>
  );
}

function RightSidebar() {
  return (
    <nav aria-label="Panels" className="flex w-[101px] shrink-0 flex-col border-r-8 border-[#23272e] bg-[#0f0f12] text-[#64708a]">
      <SideItem label="Object layers" box="h-[98px] pt-[27px]">
        <path d="M24 1L44 13L24 25L4 13ZM4 21L24 34L44 21M4 32L24 45L44 32" />
      </SideItem>
      <SideItem label="Alerts" box="h-[98px] pt-[24px]">
        <path d="M6 36C11 32 9 22 12 14C14 7 19 4 24 4C29 4 34 7 36 14C39 22 37 32 42 36ZM20 42Q24 48 28 42" />
      </SideItem>
      <SideItem label="Trades" box="h-[97px] pt-[24px] text-white bg-radial from-[#5559b0] to-[#2c4682]">
        <path d="M9 2H42V46H9ZM4 13H14M4 24H14M4 35H14M20 13H34M20 24H34M20 35H34" strokeWidth="4" />
      </SideItem>
      <SideItem label="Depth of market" box="h-[131px] pt-[24px]" badge="DOM" gap="mt-[26px]">
        <g strokeWidth="2">
          <rect x="1" y="3" width="15" height="8" /><rect x="1" y="14" width="15" height="8" />
          <circle cx="24" cy="7" r="4" /><circle cx="24" cy="18" r="4" />
          <circle cx="24" cy="30" r="4" /><circle cx="24" cy="41" r="4" />
          <rect x="32" y="26" width="15" height="8" /><rect x="32" y="37" width="15" height="8" />
        </g>
      </SideItem>
      <SideItem label="Watchlist" box="h-[84px] pt-[17px]">
        <path d="M14 11H43M14 24H43M14 36H43M4 11H7M4 24H7M4 36H7" />
      </SideItem>
      <SideItem label="Option chain" box="h-[140px] pt-[29px]" badge="Chain" gap="mt-[26px]">
        <path d="M20 28C15 23 17 19 20 16L28 8C32 3 39 4 42 8C45 12 44 17 40 21L33 28M28 20C33 25 31 29 28 32L20 40C16 45 9 44 6 40C3 36 4 31 8 27L15 20" />
      </SideItem>
      <div className="flex h-[52px] items-center justify-center border-t-2 border-[#8d8f96] text-[22px] text-[#6f7178]">Tools</div>
      <SideItem label="Screener" box="h-[78px] pt-[15px]">
        <rect x="3" y="3" width="42" height="17" rx="5" /><rect x="3" y="27" width="42" height="17" rx="5" />
        <path d="M11 12H14M11 36H14" />
      </SideItem>
      <SideItem label="Broker" box="h-[134px] pt-[27px]" badge="Broker" gap="mt-[32px]">
        <g fill="currentColor" stroke="none">
          {[0, 1, 2].map((r) => [0, 1, 2].map((c) => <rect key={`${r}${c}`} x={3 + c * 16} y={2 + r * 16} width="12" height="12" rx="2" />))}
        </g>
      </SideItem>
      <SideItem label="Expiry" box="h-[123px] pt-[19px]" badge="Expiry" gap="mt-[28px]">
        <rect x="3" y="1" width="38" height="46" rx="5" />
        <path d="M15 8V28M15 34V37M22 9H35M22 17H35M22 25H35" />
        <path d="M27 30L32 29L46 43L41 46L36 43Z" fill="#fff" stroke="none" />
      </SideItem>
      <SideItem label="Forex calendar" box="h-[123px] pt-[16px]" badge="Forex" gap="mt-[31px]">
        <path d="M4 8H44V40Q44 45 39 45H9Q4 45 4 40ZM4 19H44M15 1V11M32 1V11" />
      </SideItem>
    </nav>
  );
}

/* ------------------------------------------------------------- bottom bar */

function BottomBar() {
  const cell = "flex items-center justify-center border-r-2 border-[#2b3139]";
  return (
    <footer className="flex h-[74px] border-t-2 border-b-4 border-[#30363f] bg-[#0f0f12] text-[22px] text-[#d1d4dc]">
      <div className="flex w-[208px] items-center border-r-2 border-[#2b3139] pl-[2px]">
        <button aria-label="Single layout" className="mr-[13px] flex h-[58px] w-[68px] items-center justify-center rounded bg-[#0a7cff]">
          <span className="h-[37px] w-[42px] rounded border-2 border-white" />
        </button>
        <button aria-label="Split layout" className="mr-[28px] flex h-[37px] w-[42px] rounded border-2 border-current">
          <span className="h-full w-1/2 border-r-2 border-current" />
        </button>
        <button aria-label="More layouts"><Dots /></button>
      </div>
      <button aria-label="Full screen" className={`${cell} w-[105px]`}><Maximize size={34} /></button>
      <button aria-label="Theme" className={`${cell} w-[89px]`}><Palette size={32} strokeWidth={1.800} /></button>
      <button className={`${cell} w-[173px] gap-[18px]`}><Cloud size={34} strokeWidth={1.700} />Save</button>
      <button className={`${cell} w-[250px] gap-[14px]`}>
        <Code size={34} strokeWidth={1.700} />
        Script
        <span className="ml-[10px] rounded bg-[#ff9f0a] px-[8px] text-[17px] leading-6 font-bold text-white">BETA</span>
      </button>
      <button className={`${cell} w-[156px] gap-[16px]`}>
        <svg viewBox="0 0 30 32" className="h-8 w-[30px]" fill="none" stroke="currentColor" strokeWidth="2" aria-hidden="true">
          <path d="M18 4C10 0 7 8 7 13C7 19 6 20 2 24H27C24 22 23 20 23 17M12 28Q14 31 17 28M18 11H28M23 6V16" />
        </svg>
        Alert
      </button>
      <button className={`${cell} w-[223px] gap-[20px]`}>
        <svg viewBox="0 0 32 30" className="h-[30px] w-8" fill="none" stroke="currentColor" strokeWidth="2" aria-hidden="true">
          <path d="M1 28H31M4 28V22H8V28M11 28V16H15V28M18 28V10H22V28M25 28V1H29V28" />
        </svg>
        Financials
      </button>
      <button className={`${cell} w-[195px] gap-[16px]`}>
        <svg viewBox="0 0 30 36" className="h-9 w-[30px]" fill="none" stroke="currentColor" strokeWidth="2" aria-hidden="true">
          <path d="M1 4H29V35H1ZM7 11H24M7 16H24M7 21H24M7 26H24M7 31H24M8 2H22" />
        </svg>
        Account
      </button>
      <button className={`${cell} w-[166px] gap-[14px]`}>
        <svg viewBox="0 0 34 36" className="h-9 w-[34px]" fill="currentColor" aria-hidden="true">
          <path d="M10 0L19 12H14V23H6V12H1ZM24 36L15 24H20V14H28V24H33Z" />
        </svg>
        Trade
      </button>
      <button className={`${cell} w-[202px] gap-[20px]`}>
        <svg viewBox="0 0 18 28" className="h-7 w-[18px]" fill="none" stroke="currentColor" strokeWidth="1.500" aria-hidden="true">
          <path d="M6 15V3Q6 1 7 1Q9 1 9 3V12L15 14Q16 20 13 27H6L2 19Q3 15 6 18M9 12V17M12 13V17" />
        </svg>
        One Click
      </button>
      <div className="flex-1 border-r-2 border-[#2b3139]" />
      <button aria-label="Help" className="flex w-[90px] items-center justify-center border-r border-[#1d2026]"><CircleHelp size={34} strokeWidth={1.800} /></button>
      <button aria-label="Ideas" className="flex w-[90px] items-center justify-center">
        <svg viewBox="0 0 24 32" className="h-8 w-6" fill="none" stroke="currentColor" strokeWidth="2" aria-hidden="true">
          <path d="M8 24V20Q2 15 2 10A9 9 0 0 1 21 10Q21 15 15 20V24ZM8 28H15M10 31H14" />
        </svg>
      </button>
      <button className="mr-[4px] flex w-[187px] items-center justify-center gap-2 rounded bg-[#7a3cff] pr-1 text-[25px] font-semibold text-white">
        <svg viewBox="0 0 46 42" className="h-[42px] w-[46px]" aria-hidden="true">
          <path d="M14 12L38 2V36L14 27Z" fill="#dfe3e6" />
          <path d="M14 18L38 20V36L14 27Z" fill="#b8bec4" />
          <path d="M37 0Q45 18 37 38Q34 20 37 0Z" fill="#f6f6f6" stroke="#8f979d" />
          <rect x="3" y="11" width="13" height="17" rx="4" fill="#4fae8b" />
          <path d="M12 26L18 41L22 40L18 27Z" fill="#6cc29a" />
        </svg>
        Publish
      </button>
    </footer>
  );
}

export default function App() {
  return (
    <div className={`flex min-h-screen flex-col bg-[#0f0f12] ${UI}`}>
      <BrowserChrome />
      <TopBar />
      <main className="relative flex flex-1">
        <LeftToolbar />
        <div className="relative flex min-w-0 flex-1">
          <ChartSection />
          <button
            aria-label="Collapse panel"
            className="absolute top-[639px] right-[-18px] z-10 flex h-[58px] w-[22px] items-center justify-center rounded-md border-2 border-[#2962ff] bg-[#9db2ee] text-[#131722]"
          >
            <ChevronRight size={18} strokeWidth={3} className="shrink-0" />
          </button>
        </div>
        <TradesPanel />
        <RightSidebar />
      </main>
      <BottomBar />
    </div>
  );
}
